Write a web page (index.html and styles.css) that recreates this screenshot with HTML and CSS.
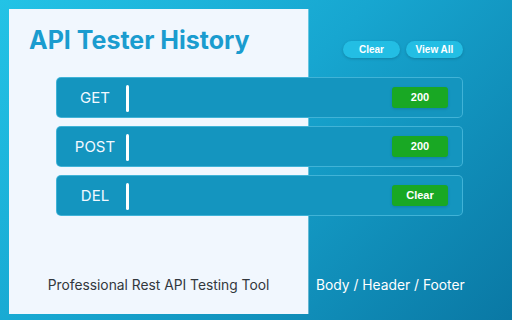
FILE: index.html
```html
<!DOCTYPE html>
<html lang="en">
<head>
    <meta charset="UTF-8">
    <meta name="viewport" content="width=device-width, initial-scale=1.0">
    <title>API Tester History</title>
    <link rel="stylesheet" href="styles.css">
</head>
<body>
    <div class="frame">
        <div class="panel"></div>

        <h1 class="title">API Tester History</h1>
        <div class="actions">
            <button class="pill-btn">Clear</button>
            <button class="pill-btn">View All</button>
        </div>

        <div class="history">
            <div class="request-row">
                <span class="method">GET</span>
                <span class="divider"></span>
                <span class="status">200</span>
            </div>
            <div class="request-row">
                <span class="method">POST</span>
                <span class="divider"></span>
                <span class="status">200</span>
            </div>
            <div class="request-row">
                <span class="method">DEL</span>
                <span class="divider"></span>
                <span class="status">Clear</span>
            </div>
        </div>

        <p class="tagline">Professional Rest API Testing Tool</p>
        <p class="sections">Body / Header / Footer</p>
    </div>
</body>
</html>
```

FILE: styles.css
```css
body {
    margin: 0;
    font-family: Inter, "Noto Sans", sans-serif;
}
.frame {
    width: 512px;
    height: 320px;
    box-sizing: border-box;
    padding: 9px 0 6px 9px;
    display: grid;
    grid-template-columns: 299px 1fr;
    grid-template-rows: 60px auto 1fr auto;
    background: linear-gradient(135deg, #23c3e6 0%, #17a6d0 45%, #0a78a4 100%);
}
.panel {
    grid-column: 1;
    grid-row: 1 / -1;
    background-color: #f1f7fe;
    box-shadow: 1px 0 0 rgba(255,255,255,0.35);
}
.title {
    grid-column: 1;
    grid-row: 1;
    margin: 0;
    padding: 16px 0 0 20px;
    font-size: 25px;
    font-weight: 700;
    color: #1a9ccf;
}
.actions {
    grid-column: 2;
    grid-row: 1;
    display: flex;
    justify-content: flex-end;
    gap: 6px;
    padding: 32px 49px 0 0;
    align-items: flex-start;
}
.pill-btn {
    width: 57px;
    height: 17px;
    padding: 0;
    border: none;
    border-radius: 9px;
    background-color: #23bee4;
    color: white;
    font-family: "Liberation Sans", Arial, sans-serif;
    font-size: 10px;
    font-weight: bold;
    box-shadow: 0 1px 3px rgba(0,0,0,0.18);
}
.history {
    grid-column: 1 / -1;
    grid-row: 2;
    display: flex;
    flex-direction: column;
    gap: 8px;
    margin: 8px 49px 0 47px;
}
.request-row {
    height: 41px;
    box-sizing: border-box;
    display: flex;
    align-items: center;
    background-color: #1495bf;
    border: 1px solid rgba(120,215,245,0.45);
    border-radius: 5px;
}
.method {
    width: 62px;
    margin-left: 7px;
    text-align: center;
    font-size: 15px;
    color: #f2f9ff;
}
.divider {
    width: 3px;
    height: 27px;
    margin-top: 2px;
    border-radius: 2px;
    background-color: white;
}
.status {
    margin-left: auto;
    margin-right: 14px;
    width: 56px;
    height: 21px;
    line-height: 21px;
    text-align: center;
    border-radius: 3px;
    background-color: #19a824;
    color: white;
    font-family: "Liberation Sans", Arial, sans-serif;
    font-size: 11px;
    font-weight: bold;
    box-shadow: 0 1px 3px rgba(0,0,0,0.15);
}
.tagline {
    grid-column: 1;
    grid-row: 4;
    margin: 0 0 21px;
    text-align: center;
    font-size: 13.8px;
    color: #33373d;
}
.sections {
    grid-column: 2;
    grid-row: 4;
    margin: 0 0 21px 8px;
    font-size: 13.8px;
    color: white;
}
```
